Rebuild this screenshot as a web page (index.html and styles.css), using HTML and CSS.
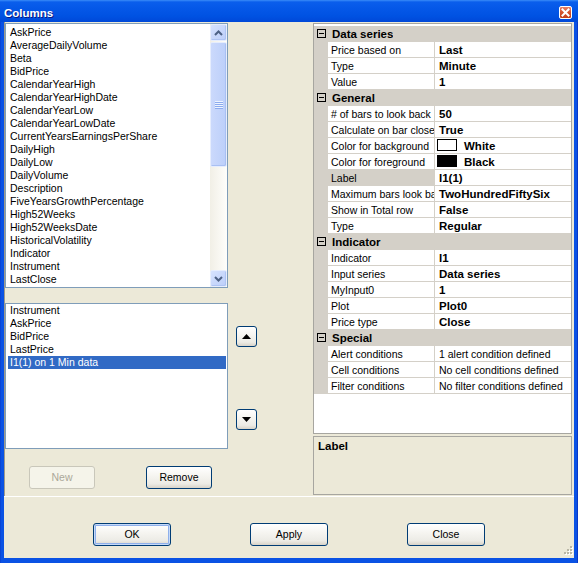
FILE: index.html
```html
<!DOCTYPE html>
<html>
<head>
<meta charset="utf-8">
<title>Columns</title>
<link rel="stylesheet" href="styles.css">
</head>
<body>
<div class="window">
  <div class="titlebar">
    <span class="title">Columns</span>
    <span class="close"><svg width="11" height="11" viewBox="0 0 11 11"><path d="M2.5 2.5 L8.5 8.5 M8.5 2.5 L2.5 8.5" stroke="#fff" stroke-width="2" stroke-linecap="square"/></svg></span>
  </div>
  <div class="client">
    <div class="upper">
      <div class="leftcol">
        <div class="listbox top">
          <div class="items">
            <div class="item">AskPrice</div>
            <div class="item">AverageDailyVolume</div>
            <div class="item">Beta</div>
            <div class="item">BidPrice</div>
            <div class="item">CalendarYearHigh</div>
            <div class="item">CalendarYearHighDate</div>
            <div class="item">CalendarYearLow</div>
            <div class="item">CalendarYearLowDate</div>
            <div class="item">CurrentYearsEarningsPerShare</div>
            <div class="item">DailyHigh</div>
            <div class="item">DailyLow</div>
            <div class="item">DailyVolume</div>
            <div class="item">Description</div>
            <div class="item">FiveYearsGrowthPercentage</div>
            <div class="item">High52Weeks</div>
            <div class="item">High52WeeksDate</div>
            <div class="item">HistoricalVolatility</div>
            <div class="item">Indicator</div>
            <div class="item">Instrument</div>
            <div class="item">LastClose</div>
          </div>
          <div class="vscroll">
            <div class="sb-btn"><svg width="9" height="6" viewBox="0 0 9 6"><polyline points="1,5 4.5,1.5 8,5" fill="none" stroke="#4D6185" stroke-width="2"/></svg></div>
            <div class="thumb"><span class="griplines"></span></div>
            <div class="track"></div>
            <div class="sb-btn"><svg width="9" height="6" viewBox="0 0 9 6"><polyline points="1,1 4.5,4.5 8,1" fill="none" stroke="#4D6185" stroke-width="2"/></svg></div>
          </div>
        </div>
        <div class="listbox bottom">
          <div class="items">
            <div class="item">Instrument</div>
            <div class="item">AskPrice</div>
            <div class="item">BidPrice</div>
            <div class="item">LastPrice</div>
            <div class="item selected">I1(1) on 1 Min data</div>
          </div>
        </div>
        <div class="btnrow">
          <button class="xpbtn small disabled">New</button>
          <button class="xpbtn small">Remove</button>
        </div>
      </div>
      <div class="midcol">
        <button class="xpbtn arrow up"><svg width="9" height="5" viewBox="0 0 9 5"><polygon points="0,5 4.5,0 9,5" fill="#000"/></svg></button>
        <button class="xpbtn arrow down"><svg width="9" height="5" viewBox="0 0 9 5"><polygon points="0,0 4.5,5 9,0" fill="#000"/></svg></button>
      </div>
      <div class="rightcol">
        <div class="grid">
          <div class="cat"><span class="mg"><span class="minus"></span></span><span class="catname">Data series</span></div>
          <div class="row"><span class="mg"></span><span class="lbl">Price based on</span><span class="sep"></span><span class="val">Last</span></div>
          <div class="row"><span class="mg"></span><span class="lbl">Type</span><span class="sep"></span><span class="val">Minute</span></div>
          <div class="row"><span class="mg"></span><span class="lbl">Value</span><span class="sep"></span><span class="val">1</span></div>
          <div class="cat"><span class="mg"><span class="minus"></span></span><span class="catname">General</span></div>
          <div class="row"><span class="mg"></span><span class="lbl"># of bars to look back</span><span class="sep"></span><span class="val">50</span></div>
          <div class="row"><span class="mg"></span><span class="lbl">Calculate on bar close</span><span class="sep"></span><span class="val">True</span></div>
          <div class="row"><span class="mg"></span><span class="lbl">Color for background</span><span class="sep"></span><span class="val color"><span class="swatch white"></span><span class="cname">White</span></span></div>
          <div class="row"><span class="mg"></span><span class="lbl">Color for foreground</span><span class="sep"></span><span class="val color"><span class="swatch black"></span><span class="cname">Black</span></span></div>
          <div class="row"><span class="mg"></span><span class="lbl sel">Label</span><span class="sep"></span><span class="val">I1(1)</span></div>
          <div class="row"><span class="mg"></span><span class="lbl">Maximum bars look back</span><span class="sep"></span><span class="val">TwoHundredFiftySix</span></div>
          <div class="row"><span class="mg"></span><span class="lbl">Show in Total row</span><span class="sep"></span><span class="val">False</span></div>
          <div class="row"><span class="mg"></span><span class="lbl">Type</span><span class="sep"></span><span class="val">Regular</span></div>
          <div class="cat"><span class="mg"><span class="minus"></span></span><span class="catname">Indicator</span></div>
          <div class="row"><span class="mg"></span><span class="lbl">Indicator</span><span class="sep"></span><span class="val">I1</span></div>
          <div class="row"><span class="mg"></span><span class="lbl">Input series</span><span class="sep"></span><span class="val">Data series</span></div>
          <div class="row"><span class="mg"></span><span class="lbl">MyInput0</span><span class="sep"></span><span class="val">1</span></div>
          <div class="row"><span class="mg"></span><span class="lbl">Plot</span><span class="sep"></span><span class="val">Plot0</span></div>
          <div class="row"><span class="mg"></span><span class="lbl">Price type</span><span class="sep"></span><span class="val">Close</span></div>
          <div class="cat"><span class="mg"><span class="minus"></span></span><span class="catname">Special</span></div>
          <div class="row"><span class="mg"></span><span class="lbl">Alert conditions</span><span class="sep"></span><span class="val plain">1 alert condition defined</span></div>
          <div class="row"><span class="mg"></span><span class="lbl">Cell conditions</span><span class="sep"></span><span class="val plain">No cell conditions defined</span></div>
          <div class="row"><span class="mg"></span><span class="lbl">Filter conditions</span><span class="sep"></span><span class="val plain">No filter conditions defined</span></div>
        </div>
        <div class="desc">Label</div>
      </div>
    </div>
    <div class="lower">
      <button class="xpbtn wide default">OK</button>
      <button class="xpbtn wide">Apply</button>
      <button class="xpbtn wide">Close</button>
    </div>
    <svg class="grip" width="12" height="12" viewBox="0 0 12 12">
      <g fill="#fff"><rect x="10" y="2" width="2" height="2"/><rect x="7" y="5" width="2" height="2"/><rect x="10" y="5" width="2" height="2"/><rect x="4" y="8" width="2" height="2"/><rect x="7" y="8" width="2" height="2"/><rect x="10" y="8" width="2" height="2"/></g>
      <g fill="#B9B6A5"><rect x="9" y="1" width="2" height="2"/><rect x="6" y="4" width="2" height="2"/><rect x="9" y="4" width="2" height="2"/><rect x="3" y="7" width="2" height="2"/><rect x="6" y="7" width="2" height="2"/><rect x="9" y="7" width="2" height="2"/></g>
    </svg>
  </div>
</div>
</body>
</html>
```

FILE: styles.css
```css
* { box-sizing: border-box; margin: 0; padding: 0; }
html, body { width: 578px; height: 563px; overflow: hidden; background: #fff; }
body { font-family: "Liberation Sans", Arial, sans-serif; font-size: 10.5px; color: #000; }

.window {
  width: 578px; height: 563px;
  background: linear-gradient(to right, #0838C8 0, #0A52E4 1px, #0A52E4 577px, #0838C8 577px);
  display: flex; flex-direction: column;
}
.titlebar {
  height: 22px; flex: none; display: flex; align-items: flex-start;
  padding: 3px 0 0 4px;
  background: linear-gradient(to bottom, #3A8CF8 0, #0A5EEC 2px, #0558E8 8px, #0052E2 16px, #0048D8 22px);
}
.title {
  font-weight: bold; font-size: 11.5px; line-height: 20px; color: #fff;
  text-shadow: 1px 1px 0 #0A1883;
}
.close {
  width: 13px; height: 13px; margin: 3px 6px 0 auto;
  border: 1px solid #fff; border-radius: 2px;
  background: linear-gradient(to bottom, #E8826A, #D4552F 45%, #C23E18);
  display: flex; align-items: center; justify-content: center;
}

.client {
  flex: 1; margin: 0 4px 5px 4px; background: #ECE9D8;
  display: flex; flex-direction: column; position: relative;
}
.upper {
  height: 474px; flex: none; display: flex; align-items: flex-start;
  padding-top: 1px; border-left: 1px solid #9D9A8C;
}
.leftcol { width: 223px; flex: none; display: flex; flex-direction: column; }

.listbox { background: #fff; border: 1px solid #7F9DB9; display: flex; overflow: hidden; }
.listbox.top { height: 265px; }
.listbox.bottom { height: 146px; margin-top: 15px; }
.items { flex: 1; overflow: hidden; }
.top .items { padding: 2px 0 0 4px; }
.bottom .items { padding: 0 1px 0 2px; }
.bottom .item { padding-left: 2px; }
.item { height: 13px; line-height: 13px; white-space: nowrap; }
.item.selected { background: #316AC5; color: #fff; }

.vscroll { width: 17px; flex: none; display: flex; flex-direction: column; background: linear-gradient(to right, #F1EFE6, #FEFEFB); }
.sb-btn {
  height: 17px; flex: none; display: flex; align-items: center; justify-content: center;
  border: 1px solid #E6EDFD; border-radius: 2px;
  background: linear-gradient(135deg, #D6E2FE, #BCCEF9);
  box-shadow: inset -1px -1px 0 #AFC4F4;
}
.thumb {
  height: 125px; flex: none; margin-top: 1px;
  border: 1px solid #E6EDFD; border-radius: 2px;
  background: linear-gradient(to right, #CBD9FC, #BCCFFA);
  box-shadow: inset -1px -1px 0 #A9C0F3;
  display: flex; align-items: center; justify-content: center;
}
.griplines {
  width: 8px; height: 8px;
  background: repeating-linear-gradient(to bottom, #EEF4FE 0, #EEF4FE 1px, #8CABEF 1px, #8CABEF 2px);
}
.track { flex: 1; }

.btnrow { display: flex; margin-top: 17px; padding-left: 24px; gap: 51px; }

.xpbtn {
  height: 23px; padding: 0;
  border: 1px solid #003C74; border-radius: 3px;
  background: linear-gradient(to bottom, #FFFFFF 0, #F6F5F1 40%, #ECEBE5 80%, #D8D3C8 100%);
  font-family: "Liberation Sans", Arial, sans-serif; font-size: 10.5px; line-height: 21px; color: #000;
  display: flex; align-items: center; justify-content: center;
}
.xpbtn.small { width: 66px; }
.xpbtn.wide { width: 78px; }
.xpbtn.disabled { border-color: #C9C7BA; background: #F5F4EA; color: #ACA899; }
.xpbtn.default { box-shadow: inset 0 0 0 1px #C6DAF8, inset 0 0 0 2px #8FB0EB; }

.midcol { width: 21px; flex: none; margin-left: 8px; display: flex; flex-direction: column; }
.xpbtn.arrow { width: 21px; height: 21px; }
.xpbtn.up { margin-top: 303px; }
.xpbtn.down { margin-top: 62px; }

.rightcol { width: 259px; flex: none; margin-left: 56px; display: flex; flex-direction: column; }
.grid {
  height: 411px; border: 1px solid #A7A6A0; background: #fff; padding-top: 2px;
  display: flex; flex-direction: column;
}
.row, .cat { display: flex; height: 16px; flex: none; }
.cat { background: #D4D0C8; }
.mg { width: 14px; flex: none; background: #D4D0C8; }
.minus {
  display: block; width: 9px; height: 9px; margin: 3px 0 0 3px;
  border: 1px solid #000;
  background: linear-gradient(#000, #000) center / 5px 1px no-repeat;
}
.catname { padding-left: 4px; font-weight: bold; font-size: 11.5px; line-height: 17px; height: 15px; overflow: hidden; white-space: nowrap; }
.lbl {
  width: 106px; flex: none; padding-left: 3px; line-height: 17px;
  border-bottom: 1px solid #D4D0C8; overflow: hidden; white-space: nowrap;
}
.lbl.sel { background: #D4D0C8; }
.sep { width: 1px; flex: none; background: #D4D0C8; }
.val {
  flex: 1; padding-left: 4px; font-weight: bold; font-size: 11.5px; line-height: 17px;
  border-bottom: 1px solid #D4D0C8; overflow: hidden; white-space: nowrap;
}
.val.plain { font-weight: normal; font-size: 10.5px; }
.val.color { padding-left: 2px; }
.swatch { display: inline-block; width: 20px; height: 12px; vertical-align: -1px; border: 1px solid #000; }
.swatch.white { background: #fff; }
.swatch.black { background: #000; }
.cname { margin-left: 7px; }

.desc {
  height: 59px; margin-top: 2px; border: 1px solid #A7A6A0;
  padding: 2px 4px; font-weight: bold; font-size: 11.5px; line-height: 15px;
}

.lower {
  flex: 1; border-top: 1px solid #fff; display: flex; align-items: flex-start;
  padding: 26px 0 0 89px; gap: 79px;
}
.grip { position: absolute; right: 1px; bottom: 1px; }
```
